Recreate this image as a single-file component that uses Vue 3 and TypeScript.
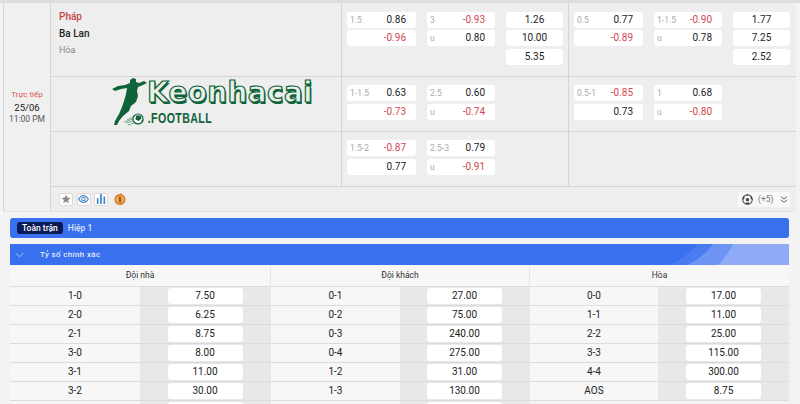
<script setup lang="ts">
interface Price { label?: string; value: string }
interface Market { rows: Price[][]; wins: string[] }

const half1: Market[] = [
  {
    rows: [
      [{ label: '1.5', value: '0.86' }, { value: '-0.96' }],
      [{ label: '3', value: '-0.93' }, { label: 'u', value: '0.80' }],
    ],
    wins: ['1.26', '10.00', '5.35'],
  },
  {
    rows: [
      [{ label: '1-1.5', value: '0.63' }, { value: '-0.73' }],
      [{ label: '2.5', value: '0.60' }, { label: 'u', value: '-0.74' }],
    ],
    wins: [],
  },
  {
    rows: [
      [{ label: '1.5-2', value: '-0.87' }, { value: '0.77' }],
      [{ label: '2.5-3', value: '0.79' }, { label: 'u', value: '-0.91' }],
    ],
    wins: [],
  },
]

const half2: Market[] = [
  {
    rows: [
      [{ label: '0.5', value: '0.77' }, { value: '-0.89' }],
      [{ label: '1-1.5', value: '-0.90' }, { label: 'u', value: '0.78' }],
    ],
    wins: ['1.77', '7.25', '2.52'],
  },
  {
    rows: [
      [{ label: '0.5-1', value: '-0.85' }, { value: '0.73' }],
      [{ label: '1', value: '0.68' }, { label: 'u', value: '-0.80' }],
    ],
    wins: [],
  },
  { rows: [], wins: [] },
]

// last row of each column is cut by the window, only the pill top shows
const scoreCols = [
  {
    title: 'Đội nhà',
    rows: [['1-0', '7.50'], ['2-0', '6.25'], ['2-1', '8.75'], ['3-0', '8.00'], ['3-1', '11.00'], ['3-2', '30.00'], ['', '']],
  },
  {
    title: 'Đội khách',
    rows: [['0-1', '27.00'], ['0-2', '75.00'], ['0-3', '240.00'], ['0-4', '275.00'], ['1-2', '31.00'], ['1-3', '130.00'], ['', '']],
  },
  {
    title: 'Hòa',
    rows: [['0-0', '17.00'], ['1-1', '11.00'], ['2-2', '25.00'], ['3-3', '115.00'], ['4-4', '300.00'], ['AOS', '8.75']],
  },
]
</script>

<template>
  <div class="page">
    <div class="match">
      <div class="time">
        <span class="time__live">Trực tiếp</span>
        <span class="time__date">25/06</span>
        <span class="time__hour">11:00 PM</span>
      </div>
      <div class="board">
        <div v-for="row in 3" :key="row" class="line" :class="`line--${row}`">
          <div class="teams">
            <template v-if="row === 1">
              <div class="teams__home">Pháp</div>
              <div class="teams__away">Ba Lan</div>
              <div class="teams__draw">Hòa</div>
            </template>
            <div v-if="row === 2" class="logo">
              <svg class="logo__player" viewBox="0 0 36 48" aria-hidden="true">
                <path fill="#0f6338" d="M0 11 6 8 13 7 18 5 18 2 21 0 24 1 24 4 27 5 32 3 35 5 31 7 26 9 25 13 26 18 24 24 19 28 17 33 11 38 7 43 5 47 2 47 3 43 7 36 10 29 12 23 14 16 15 10 9 11 3 13Z" />
                <circle cx="26" cy="41" r="5" fill="#fff" stroke="#0f6338" stroke-width="1.200" />
                <path fill="#0f6338" d="M24 37.500h4.500l1 3-3 2.500-3-1.500ZM23 43.500l2 1.500h3l-2.500 1ZM29.500 43l1.500-2 .5 2-1.500 2Z" />
                <path fill="none" stroke="#0f6338" stroke-width=".5" d="M21 39 15 42M21 41 12 44M21 43 14 45M22 45 16 47" />
              </svg>
              <div class="logo__words">
                <span class="logo__name">Keonhacai</span>
                <span class="logo__sub">.FOOTBALL</span>
              </div>
            </div>
          </div>
          <div v-for="(half, h) in [half1, half2]" :key="h" class="half">
            <div class="market">
              <div v-for="(col, c) in half[row - 1].rows" :key="c" class="market__col">
                <div v-for="(p, i) in col" :key="i" class="pill">
                  <span class="pill__label">{{ p.label }}</span>
                  <span class="pill__value" :class="{ 'pill__value--neg': p.value.startsWith('-') }">{{ p.value }}</span>
                </div>
              </div>
              <div v-if="half[row - 1].wins.length" class="market__wins">
                <div v-for="w in half[row - 1].wins" :key="w" class="pill pill--win">{{ w }}</div>
              </div>
            </div>
          </div>
        </div>
        <div class="tools">
          <div class="tools__left">
            <span class="tool">
              <svg viewBox="0 0 12 12" width="10" height="10" aria-hidden="true"><path fill="#8c8c8c" d="M6 .8 7.600 4.200 11.300 4.700 8.600 7.200 9.300 11 6 9.100 2.700 11 3.400 7.200.7 4.700 4.400 4.200Z" /></svg>
            </span>
            <span class="tool">
              <svg viewBox="0 0 14 12" width="11" height="10" fill="none" stroke="#3a82c4" stroke-width="1.300" aria-hidden="true"><path d="M.8 6C3 2.500 5 1.500 7 1.500S11 2.500 13.200 6C11 9.500 9 10.500 7 10.500S3 9.500.8 6Z" /><circle cx="7" cy="6" r="2.200" /></svg>
            </span>
            <span class="tool">
              <svg viewBox="0 0 12 12" width="10" height="10" fill="#3a82c4" aria-hidden="true"><rect x="1" y="5" width="2" height="7" /><rect x="5" y="0" width="2" height="12" /><rect x="9" y="3" width="2" height="9" /></svg>
            </span>
            <svg class="tool__coin" viewBox="0 0 12 12" width="12" height="12" aria-hidden="true"><circle cx="6" cy="6.500" r="4.800" fill="#eab05a" stroke="#d9781f" stroke-width="1.400" /><rect x="4.800" y="3.500" width="2.400" height="6" fill="#b4590f" /><path d="M6 1.500 8 0" stroke="#d9781f" stroke-width="1" /></svg>
          </div>
          <div class="more">
            <svg viewBox="0 0 12 12" width="11" height="11" aria-hidden="true"><circle cx="6" cy="6" r="5.200" fill="#fff" stroke="#444" stroke-width="1.100" /><path fill="#444" d="M6 4 8 5.400 7.300 7.800H4.700L4 5.400ZM.8 6.500 2.800 5 2.500 2 1 3.500ZM11.200 6.500 9.200 5 9.500 2 11 3.500ZM3.500 11 4.800 9.200H7.200L8.500 11ZM4 .8h4L6 2.500Z" /></svg>
            <span class="more__count">(+5)</span>
            <svg class="more__chev" viewBox="0 0 10 10" width="8" height="9" fill="none" stroke="#555" stroke-width="1.100" aria-hidden="true"><path d="M1 1.500 5 4.500 9 1.500M1 5.500 5 8.500 9 5.500" /></svg>
          </div>
        </div>
      </div>
    </div>

    <div class="detail">
      <div class="tabs">
        <span class="tabs__active">Toàn trận</span>
        <span class="tabs__item">Hiệp 1</span>
      </div>
      <div class="section">
        <svg class="section__chev" viewBox="0 0 12 8" width="9" height="6" fill="none" stroke="#cfe0ff" stroke-width="1" aria-hidden="true"><path d="M1 1.500 6 6.500 11 1.500" /></svg>
        <span class="section__title">Tỷ số chính xác</span>
        <svg class="section__deco" viewBox="0 0 121 21" width="121" height="21" aria-hidden="true">
          <path fill="#4a7cf0" d="M30 0H121V21H0C12 17 22 9 30 0Z" />
          <path fill="#6d93f3" d="M45 0H121V21H19C30 16 38 9 45 0Z" />
          <path fill="#8fabf5" d="M65 0H121V21H50C56 15 61 8 65 0Z" />
        </svg>
      </div>
      <div class="scores">
        <div v-for="col in scoreCols" :key="col.title" class="scores__col">
          <div class="scores__head">{{ col.title }}</div>
          <div v-for="(r, i) in col.rows" :key="i" class="score">
            <div class="score__name">{{ r[0] }}</div>
            <div class="score__cell"><span class="score__pill">{{ r[1] }}</span></div>
          </div>
        </div>
      </div>
    </div>
  </div>
</template>

<style>
html, body {
  margin: 0;
  background: #f3f3f3;
  overflow: hidden;
}
</style>

<style scoped>
.page {
  width: 800px;
  height: 404px;
  overflow: hidden;
  box-sizing: border-box;
  border-top: 3px solid #dddddd;
  font-family: Roboto, "Liberation Sans", sans-serif;
  font-size: 11px;
  color: #222;
  background: #f3f3f3;
}

.match {
  display: flex;
  height: 208px;
  margin: 0 4px 0 3px;
  border-left: 1px solid #d4d4d4;
  background: #eeeeee;
  box-shadow: 0 1px 0 #e4e4e4;
}

.time {
  width: 46px;
  flex: none;
  display: flex;
  flex-direction: column;
  align-items: center;
  justify-content: center;
  gap: 1.500px;
  border-right: 1px solid #d4d4d4;
  background: #f0f0f0;
  line-height: 11px;
}

.time__live {
  font-size: 8px;
  color: #d9534f;
}

.time__date {
  font-size: 9.500px;
}

.time__hour {
  font-size: 8.500px;
  color: #555;
}

.board {
  flex: 1;
  display: flex;
  flex-direction: column;
  min-width: 0;
}

.line {
  display: flex;
  box-sizing: border-box;
  border-bottom: 1px solid #d4d4d4;
}

.line--1 { height: 74px; }
.line--2 { height: 55px; }
.line--3 { height: 55px; }

.teams {
  width: 291px;
  flex: none;
  box-sizing: border-box;
  border-right: 1px solid #d4d4d4;
  padding: 8px 0 0 8px;
}

.line--2 .teams {
  padding: 0;
}

.teams__home {
  font-size: 10px;
  font-weight: 500;
  line-height: 12px;
  color: #c9444a;
}

.teams__away {
  margin-top: 5px;
  font-size: 10px;
  font-weight: 500;
  line-height: 12px;
  color: #222;
}

.teams__draw {
  margin-top: 5px;
  font-size: 9px;
  line-height: 11px;
  color: #888;
}

.logo {
  display: flex;
  align-items: flex-start;
  margin: 1px 0 0 61px;
}

.logo__player {
  width: 36px;
  height: 48px;
  flex: none;
}

.logo__words {
  display: flex;
  flex-direction: column;
  margin-left: -1px;
}

.logo__name {
  font-family: "DejaVu Sans", sans-serif;
  font-size: 28px;
  font-weight: 700;
  line-height: 30px;
  letter-spacing: .3px;
  color: #e9f1ea;
  -webkit-text-stroke: 1.200px #0f6338;
  text-shadow: 1px 2px 0 #0f6338;
}

.logo__sub {
  margin-top: 2px;
  padding-left: 1px;
  font-family: "Liberation Sans", sans-serif;
  font-size: 14px;
  font-weight: 700;
  line-height: 14px;
  color: #0f6338;
  transform: scale(.76, 1.1);
  transform-origin: left top;
  letter-spacing: .5px;
}

.half {
  width: 227px;
  flex: none;
  box-sizing: border-box;
  padding: 8px 0 0 5px;
  border-right: 1px solid #d4d4d4;
}

.line--1 .half {
  padding-top: 8.700px;
}

.half:last-child {
  border-right: 0;
  width: 227px;
}

.market {
  display: flex;
  gap: 11px;
}

.market__col,
.market__wins {
  display: flex;
  flex-direction: column;
  gap: 2.500px;
}

.market__col {
  width: 69px;
}

.market__col:nth-child(2) {
  width: 68px;
}

.market__wins {
  width: 57px;
}

.pill {
  height: 16px;
  display: flex;
  align-items: center;
  justify-content: space-between;
  padding: 0 10px 0 3px;
  box-sizing: border-box;
  background: #fff;
  border-radius: 3px;
  font-size: 10px;
  line-height: 16px;
}

.pill--win {
  justify-content: center;
  padding: 0;
}

.pill__label {
  font-size: 8.500px;
  color: #aaa;
}

.pill__value {
  color: #222;
}

.pill__value--neg {
  color: #d2484e;
}

.tools {
  flex: 1;
  display: flex;
  align-items: center;
  justify-content: space-between;
  padding: 0 6px 0 8px;
}

.tools__left {
  display: flex;
  align-items: center;
  gap: 3.500px;
}

.tool {
  width: 14px;
  height: 13px;
  display: flex;
  align-items: center;
  justify-content: center;
  background: #fff;
  border: 1px solid #e2d9d4;
  border-radius: 2px;
  box-sizing: border-box;
}

.tool__coin {
  margin-left: 2px;
}

.more {
  display: flex;
  align-items: center;
  gap: 5px;
  height: 15px;
  width: 52px;
  padding-left: 4px;
  box-sizing: border-box;
  background: #f8f8f8;
  border-radius: 2px;
}

.more__count {
  font-size: 8.500px;
  color: #777;
}

.more__chev {
  margin-left: 2px;
}

.detail {
  margin: 7px 11px 0 10px;
}

.tabs {
  height: 20px;
  display: flex;
  align-items: center;
  gap: 5px;
  padding-left: 7px;
  background: #3870ee;
  border-radius: 3px;
  color: #fff;
  font-size: 8.500px;
  font-weight: 500;
}

.tabs__active {
  padding: 0 5px;
  height: 12px;
  line-height: 12px;
  background: #081b56;
  border-radius: 3px;
}

.tabs__item {
  color: #d6e2ff;
}

.section {
  position: relative;
  margin-top: 6px;
  height: 21px;
  display: flex;
  align-items: center;
  padding-left: 5px;
  gap: 16px;
  color: #e3ecff;
  font-size: 8px;
  letter-spacing: .35px;
  font-weight: 500;
  background: #3870ee;
}

.section__deco {
  position: absolute;
  right: 0;
  top: 0;
}

.scores {
  display: grid;
  grid-template-columns: 260px 259px 260px;
}

.scores__col {
  min-width: 0;
  border-left: 1px solid #e6e6e6;
}

.scores__col:first-child {
  border-left: 0;
}

.scores__head {
  height: 22px;
  line-height: 21px;
  text-align: center;
  font-size: 8.500px;
  color: #333;
  background: #f7f7f7;
  border-bottom: 1px solid #dcdcdc;
  box-sizing: border-box;
}

.score {
  height: 19px;
  display: grid;
  grid-template-columns: 1fr 1fr;
  box-sizing: border-box;
  border-bottom: 1px solid #dcdcdc;
  background: #f7f7f7;
}

.scores__col:last-child .score {
  grid-template-columns: 128px 1fr;
}

.score__name {
  text-align: center;
  font-size: 10px;
  line-height: 18px;
}

.score__cell {
  display: flex;
  align-items: center;
  justify-content: center;
  background: #e8e8e8;
}

.score__pill {
  width: 75px;
  height: 16px;
  line-height: 16px;
  text-align: center;
  background: #fff;
  border-radius: 3px;
  font-size: 10px;
}
</style>
